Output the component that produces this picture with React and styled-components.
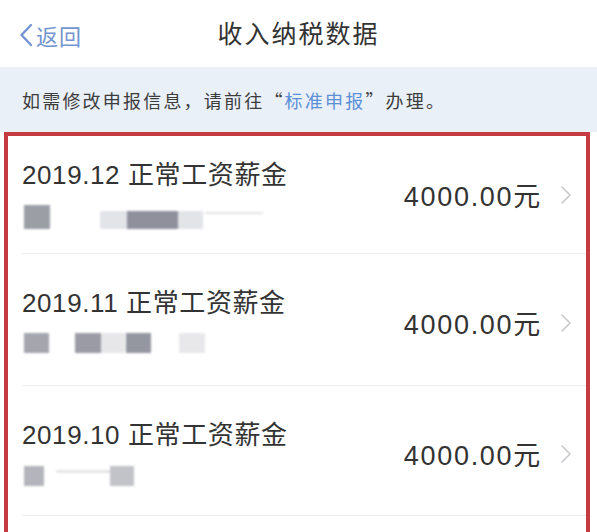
import React from 'react';
import styled, { createGlobalStyle } from 'styled-components';

const GlobalStyle = createGlobalStyle`
  html, body {
    margin: 0;
    padding: 0;
    background: #fff;
  }
  body {
    font-family: 'Liberation Sans', Arial, 'Noto Sans CJK SC', sans-serif;
    color: #333;
  }
`;

const Page = styled.div`
  width: 597px;
  height: 532px;
  overflow: hidden;
  background: #fff;
`;

const NavBar = styled.div`
  position: relative;
  height: 68px;
  display: flex;
  align-items: center;
  justify-content: center;
  background: #fff;
  border-bottom: 1px solid #eef0f5;
  box-sizing: border-box;
`;

const BackButton = styled.div`
  position: absolute;
  left: 19px;
  top: 19px;
  display: flex;
  align-items: center;
  gap: 3px;
  color: #7394d2;
  font-size: 22px;
  letter-spacing: 1px;
  font-family: 'Noto Sans CJK SC', sans-serif;
`;

const NavTitle = styled.h1`
  margin: 0 0 4px;
  font-size: 25px;
  font-weight: 400;
  letter-spacing: 2px;
  color: #333;
  font-family: 'Noto Sans CJK SC', sans-serif;
`;

const Notice = styled.div`
  height: 64px;
  background: #eaf0f8;
  display: flex;
  align-items: center;
  padding: 0 0 0 22px;
  font-size: 18px;
  letter-spacing: 2.2px;
  color: #3c3c3c;
  font-family: 'Noto Sans CJK SC', sans-serif;
`;

const Link = styled.span`
  color: #5b8fd6;
`;

const Frame = styled.div`
  margin: 0 7px 0 4px;
  border: 4px solid #c63a42;
  border-bottom: none;
  box-sizing: border-box;
  height: 400px;
  background: #fff;
`;

const Row = styled.div`
  display: flex;
  align-items: center;
  height: ${p => p.$height}px;
  margin-left: 14px;
  border-bottom: 1px solid #eeeeee;
  box-sizing: border-box;
`;

const Info = styled.div`
  flex: 1;
  display: flex;
  flex-direction: column;
  gap: 14px;
  align-self: flex-start;
  padding-top: ${p => p.$top}px;
`;

const Title = styled.div`
  font-size: 26px;
  letter-spacing: 0.6px;
  color: #333;
  line-height: 30px;
`;

const Mosaic = styled.div`
  position: relative;
  height: 26px;
  filter: blur(1.2px);
`;

const Block = styled.span`
  position: absolute;
  left: ${p => p.$x}px;
  top: ${p => p.$y}px;
  width: ${p => p.$w}px;
  height: ${p => p.$h}px;
  background: ${p => p.$c};
`;

const Amount = styled.div`
  font-size: 27px;
  letter-spacing: 1.7px;
  color: #333;
  margin-right: 18px;
  margin-top: ${p => p.$offset}px;
`;

const Chevron = styled.svg`
  width: 12px;
  height: 20px;
  margin-right: 14px;
  margin-top: ${p => p.$offset}px;
`;

const rows = [
  {
    title: '2019.12 正常工资薪金',
    height: 118,
    top: 24,
    offset: 0,
    blocks: [
      { x: 2, y: 1, w: 26, h: 24, c: '#9c9ea6' },
      { x: 78, y: 7, w: 103, h: 18, c: '#e3e4e8' },
      { x: 105, y: 7, w: 51, h: 18, c: '#8f909c' },
      { x: 183, y: 8, w: 58, h: 2, c: '#e4e4e4' },
    ],
  },
  {
    title: '2019.11 正常工资薪金',
    height: 132,
    top: 34,
    offset: 6,
    blocks: [
      { x: 2, y: 1, w: 25, h: 20, c: '#a4a5ad' },
      { x: 53, y: 1, w: 26, h: 20, c: '#9a9ba4' },
      { x: 79, y: 1, w: 24, h: 20, c: '#e7e7ea' },
      { x: 104, y: 1, w: 25, h: 20, c: '#9496a0' },
      { x: 157, y: 1, w: 26, h: 20, c: '#e8e8eb' },
    ],
  },
  {
    title: '2019.10 正常工资薪金',
    height: 130,
    top: 34,
    offset: 6,
    blocks: [
      { x: 2, y: 2, w: 20, h: 20, c: '#b4b5bc' },
      { x: 34, y: 6, w: 60, h: 3, c: '#e6e6e8' },
      { x: 88, y: 2, w: 24, h: 20, c: '#c2c3c8' },
    ],
  },
];

const App = () => (
  <Page>
    <GlobalStyle />
    <NavBar>
      <BackButton>
        <svg width="14" height="24" viewBox="0 0 14 24">
          <path d="M12 2 L2.5 12 L12 22" fill="none" stroke="#7394d2" strokeWidth="2.4" strokeLinecap="round" strokeLinejoin="round" />
        </svg>
        <span>返回</span>
      </BackButton>
      <NavTitle>收入纳税数据</NavTitle>
    </NavBar>
    <Notice>
      如需修改申报信息，请前往“<Link>标准申报</Link>”办理。
    </Notice>
    <Frame>
      {rows.map(r => (
        <Row key={r.title} $height={r.height}>
          <Info $top={r.top}>
            <Title>{r.title}</Title>
            <Mosaic>
              {r.blocks.map((b, i) => (
                <Block key={i} $x={b.x} $y={b.y} $w={b.w} $h={b.h} $c={b.c} />
              ))}
            </Mosaic>
          </Info>
          <Amount $offset={r.offset}>4000.00元</Amount>
          <Chevron viewBox="0 0 12 20" $offset={r.offset}>
            <path d="M2 2 L10 10 L2 18" fill="none" stroke="#c7c7cc" strokeWidth="1.6" strokeLinecap="round" strokeLinejoin="round" />
          </Chevron>
        </Row>
      ))}
    </Frame>
  </Page>
);

export default App;
